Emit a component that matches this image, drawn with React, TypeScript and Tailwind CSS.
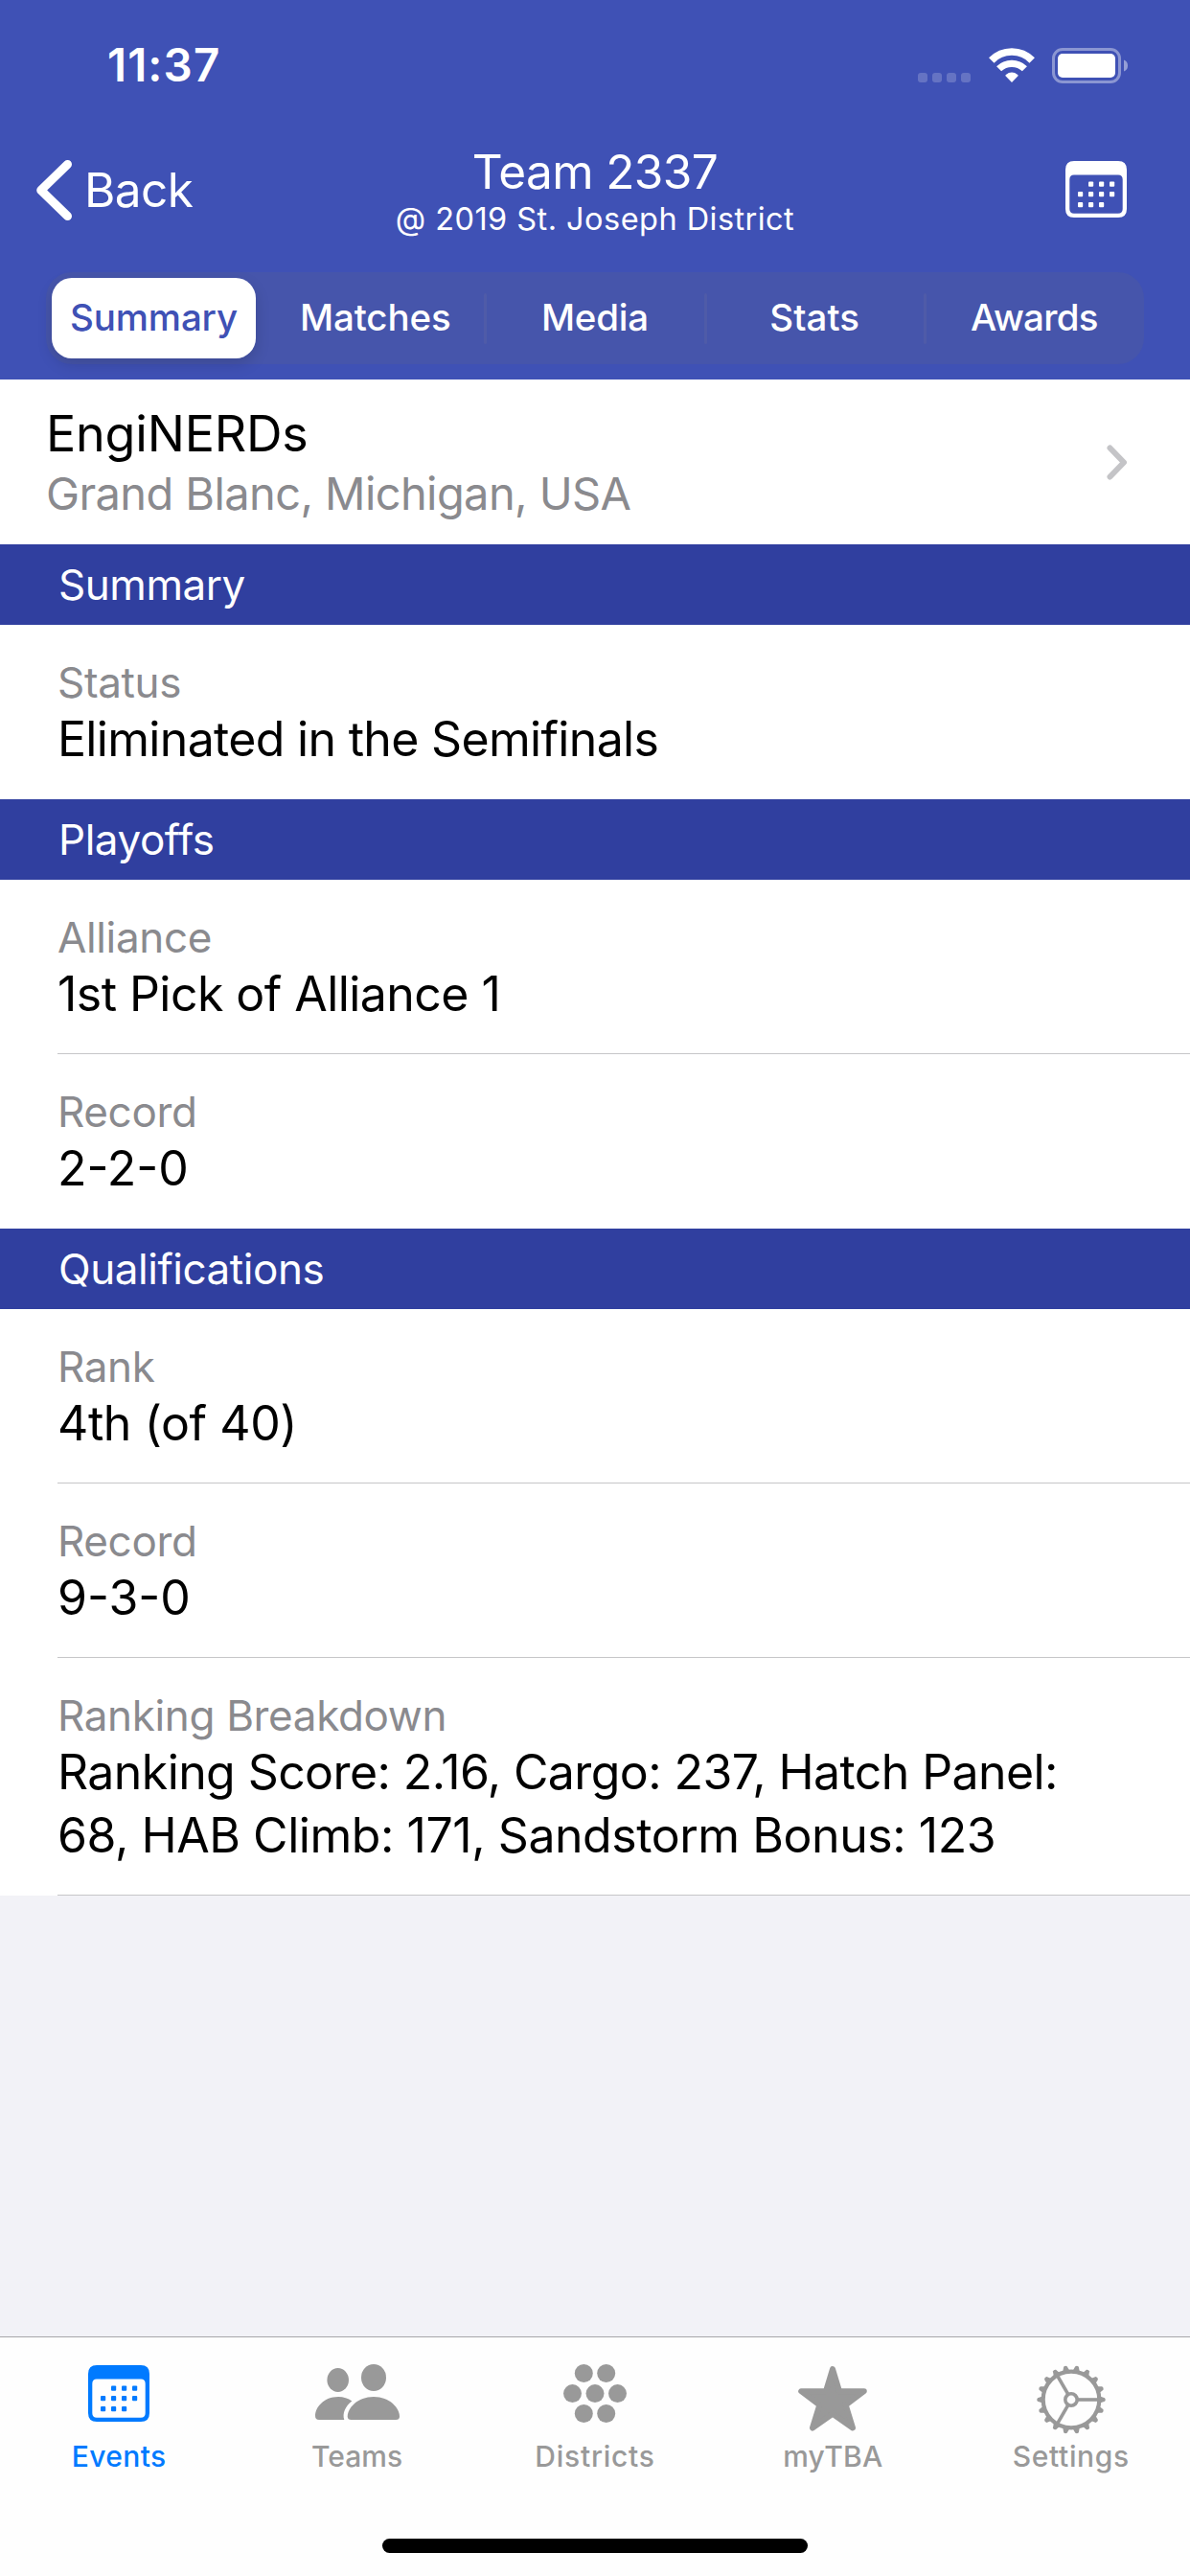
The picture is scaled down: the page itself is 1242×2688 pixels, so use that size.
import type { ReactNode } from "react";

const calendarDots = [
  [24, 21.5], [35, 21.5], [46, 21.5],
  [13, 32], [24, 32], [35, 32], [46, 32],
  [13, 43], [24, 43], [35, 43],
];

function CalendarIcon() {
  return (
    <svg width="64" height="59" viewBox="0 0 64 59" fill="currentColor">
      <path
        fillRule="evenodd"
        d="M9 0H55Q64 0 64 9V50Q64 59 55 59H9Q0 59 0 50V9Q0 0 9 0ZM9 14.5Q4.3 14.5 4.3 19.2V50Q4.3 54.7 9 54.7H55Q59.7 54.7 59.7 50V19.2Q59.7 14.5 55 14.5Z"
      />
      {calendarDots.map(([x, y]) => (
        <rect key={`${x}-${y}`} x={x} y={y} width="5.2" height="5.2" rx="1" />
      ))}
    </svg>
  );
}

function TeamsIcon() {
  return (
    <svg width="88" height="58" viewBox="0 0 88 58" fill="currentColor">
      <ellipse cx="61" cy="14" rx="13" ry="14" />
      <ellipse cx="23.7" cy="16.5" rx="11.3" ry="12.5" />
      <path d="M33.7 54.5C33.7 46 44 34 61 34S88 46 88 54.5Q88 58 84 58H37.7Q33.7 58 33.7 54.5Z" />
      <path d="M0 54C0 45 9 34 24 34C29.5 34 34.5 35.5 38.3 38.5C31.5 43.5 28 51.5 30.3 58H4Q0 58 0 54Z" />
    </svg>
  );
}

const hexDots = [[21.3, 9.5], [44.7, 9.5], [9.5, 30.6], [33, 30.6], [56.5, 30.6], [21.3, 51.5], [44.7, 51.5]];

function DistrictsIcon() {
  return (
    <svg width="66" height="61" viewBox="0 0 66 61" fill="currentColor">
      {hexDots.map(([x, y]) => (
        <circle key={`${x}-${y}`} cx={x} cy={y} r="9.5" />
      ))}
    </svg>
  );
}

function StarIcon() {
  return (
    <svg width="72" height="70" viewBox="0 0 72 70" fill="currentColor">
      <path
        d="M36 4L43 27.2H68.8L49.6 41.500L57 65.500L36 50.700L15 65.500L22.400 41.500L3.200 27.200H29Z"
        stroke="currentColor"
        strokeWidth="6"
        strokeLinejoin="round"
      />
    </svg>
  );
}

const teeth = Array.from({ length: 18 }, (_, i) => i * 20);

function SettingsIcon() {
  return (
    <svg width="72" height="74" viewBox="0 0 72 74" fill="none" stroke="currentColor">
      <g transform="translate(36 37)">
        <circle r="29.3" strokeWidth="4.2" />
        <circle r="6.2" strokeWidth="3.6" />
        {[0, 120, 240].map((a) => (
          <path key={a} d="M7 0H29" strokeWidth="3.6" transform={`rotate(${a})`} />
        ))}
        {teeth.map((a) => (
          <path
            key={a}
            d="M30 -3.6L35 -1.8Q36.5 0 35 1.8L30 3.6Z"
            fill="currentColor"
            stroke="none"
            transform={`rotate(${a})`}
          />
        ))}
      </g>
    </svg>
  );
}

function StatusBar() {
  return (
    <div className="flex h-[136px] items-center justify-between pr-[65px] pl-[112px]">
      <span className="text-[47.5px] font-semibold tracking-[1.1px]">11:37</span>
      <div className="flex items-end">
        <div className="mr-[19px] flex gap-[5px] pb-px">
          {[0, 1, 2, 3].map((i) => (
            <span key={i} className="h-[10px] w-[10px] rounded-[3px] bg-white/20" />
          ))}
        </div>
        <svg className="mr-[18px] mb-px" width="48" height="36" viewBox="0 0 48 36" fill="none" stroke="#fff">
          <path d="M2.8 13A29.5 29.5 0 0 1 45.2 13" strokeWidth="7.6" />
          <path d="M10.6 21.8A19.1 19.1 0 0 1 37.4 21.8" strokeWidth="7.2" />
          <path d="M24 36L17.5 29.3Q17 28.5 17.8 27.9Q24 23 30.2 27.9Q31 28.5 30.5 29.3Z" fill="#fff" stroke="none" />
        </svg>
        <svg width="79" height="37" viewBox="0 0 79 37">
          <rect x="1.5" y="1.5" width="69" height="34" rx="9.5" fill="none" stroke="#fff" strokeOpacity="0.4" strokeWidth="3" />
          <rect x="6" y="6" width="60" height="25" rx="5" fill="#fff" />
          <path d="M75 12.5Q79 14 79 18.5T75 24.5Z" fill="#fff" fillOpacity="0.45" />
        </svg>
      </div>
    </div>
  );
}

function NavBar() {
  return (
    <div className="grid h-[126px] grid-cols-[1fr_auto_1fr] items-center">
      <div className="flex items-center pb-[2px] pl-[37px]">
        <svg width="38" height="63" viewBox="0 0 38 63" fill="none" stroke="#fff" strokeWidth="9" strokeLinecap="round" strokeLinejoin="round">
          <path d="M33.5 4.5L5.7 31.5L33.5 58.500" />
        </svg>
        <span className="ml-[13px] text-[49.5px] leading-[60px] tracking-[-0.6px]">Back</span>
      </div>
      <div className="flex flex-col items-center">
        <span className="text-[49.5px] leading-[59px] tracking-[-0.6px]">Team 2337</span>
        <span className="text-[32.5px] leading-[40px] tracking-[0.45px]">@ 2019 St. Joseph District</span>
      </div>
      <div className="flex justify-end pr-[66px] pb-[3px]">
        <CalendarIcon />
      </div>
    </div>
  );
}

const segments = [
  { label: "Matches", style: "tracking-[-0.1px]", divider: false },
  { label: "Media", style: "tracking-[-0.2px]", divider: true },
  { label: "Stats", style: "tracking-[0.1px]", divider: true },
  { label: "Awards", style: "tracking-[-0.7px]", divider: true },
];

function SegmentedControl() {
  return (
    <div className="mx-[48px] mt-[22px] grid h-[96px] grid-cols-5 items-center rounded-[27px] bg-[#4655ab] text-[38.5px]">
      <div className="ml-[6px] flex h-[84px] w-[213px] items-center justify-center rounded-[21px] bg-white font-medium tracking-[-0.15px] text-[#3f51b5] shadow-[0_6px_16px_rgba(0,0,0,0.14)]">
        Summary
      </div>
      {segments.map((s) => (
        <div key={s.label} className="relative flex h-[53px] items-center justify-center font-[450]">
          {s.divider && <span className="absolute top-0 left-[-1px] h-full w-[3px] rounded-full bg-[#4f5ba8]" />}
          <span className={s.style}>{s.label}</span>
        </div>
      ))}
    </div>
  );
}

function SectionHeader({ children }: { children: string }) {
  return (
    <div className="flex h-[84px] items-center bg-[#303f9f] pl-[61px] text-[44px] tracking-[-0.45px] text-white">{children}</div>
  );
}

function Row({ label, children, last = false }: { label: string; children: ReactNode; last?: boolean }) {
  return (
    <div className="relative bg-white pt-[34px] pr-[80px] pb-[30px] pl-[60px]">
      <div className="text-[44px] leading-[52px] tracking-[-0.35px] text-[#8a8a8e]">{label}</div>
      <div className="text-[50px] leading-[66px] text-black">{children}</div>
      {!last && <span className="absolute right-0 bottom-0 left-[60px] h-px bg-[#c6c6c8]" />}
    </div>
  );
}

const tabs = [
  { label: "Events", icon: <CalendarIcon />, style: "text-[#007aff] tracking-[0.4px]", pad: "pt-px" },
  { label: "Teams", icon: <TeamsIcon />, style: "text-[#999999]", pad: "" },
  { label: "Districts", icon: <DistrictsIcon />, style: "text-[#999999] tracking-[0.75px]", pad: "" },
  { label: "myTBA", icon: <StarIcon />, style: "text-[#999999] tracking-[0.3px]", pad: "pt-px" },
  { label: "Settings", icon: <SettingsIcon />, style: "text-[#999999] tracking-[0.65px]", pad: "" },
];

function TabBar() {
  return (
    <div className="flex h-[250px] flex-col items-center border-t border-[#a7a7aa] bg-[#fefefe]">
      <div className="grid h-[210px] w-full grid-cols-5 pt-[28px]">
        {tabs.map((t) => (
          <div key={t.label} className={`flex flex-col items-center ${t.style}`}>
            <div className={`mb-[4px] h-[74px] ${t.pad}`}>{t.icon}</div>
            <span className="text-[30px] leading-[36px] font-medium">{t.label}</span>
          </div>
        ))}
      </div>
      <div className="h-[15px] w-[444px] rounded-full bg-black" />
    </div>
  );
}

export default function App() {
  return (
    <div className="flex h-[2688px] w-[1242px] flex-col overflow-hidden bg-[#f2f2f7] font-['Inter','Liberation_Sans',sans-serif]">
      <header className="h-[396px] shrink-0 bg-[#3f51b5] text-white">
        <StatusBar />
        <NavBar />
        <SegmentedControl />
      </header>
      <main className="flex-1">
        <div className="flex h-[172px] items-center justify-between bg-white pr-[65px] pl-[48px]">
          <div className="pb-px">
            <div className="text-[52px] leading-[66px] tracking-[-0.2px] text-black">EngiNERDs</div>
            <div className="text-[47px] leading-[57px] tracking-[-0.6px] text-[#8a8a8e]">Grand Blanc, Michigan, USA</div>
          </div>
          <svg width="22" height="37" viewBox="0 0 22 37" fill="none" stroke="#c4c4c7" strokeWidth="6" strokeLinecap="round" strokeLinejoin="round">
            <path d="M3.5 3.5L18 18.5L3.5 33.5" />
          </svg>
        </div>
        <SectionHeader>Summary</SectionHeader>
        <Row label="Status" last>
          <span className="tracking-[-0.68px]">Eliminated in the Semifinals</span>
        </Row>
        <SectionHeader>Playoffs</SectionHeader>
        <Row label="Alliance">
          <span className="tracking-[-0.55px]">1st Pick of Alliance 1</span>
        </Row>
        <Row label="Record" last>2-2-0</Row>
        <SectionHeader>Qualifications</SectionHeader>
        <Row label="Rank">
          <span className="tracking-[-0.4px]">4th (of 40)</span>
        </Row>
        <Row label="Record">9-3-0</Row>
        <Row label="Ranking Breakdown">
          <span className="tracking-[-0.59px]">Ranking Score: 2.16, Cargo: 237, Hatch Panel:</span>
          <br />
          <span className="tracking-[-0.45px]">68, HAB Climb: 171, Sandstorm Bonus: 123</span>
        </Row>
      </main>
      <TabBar />
    </div>
  );
}
